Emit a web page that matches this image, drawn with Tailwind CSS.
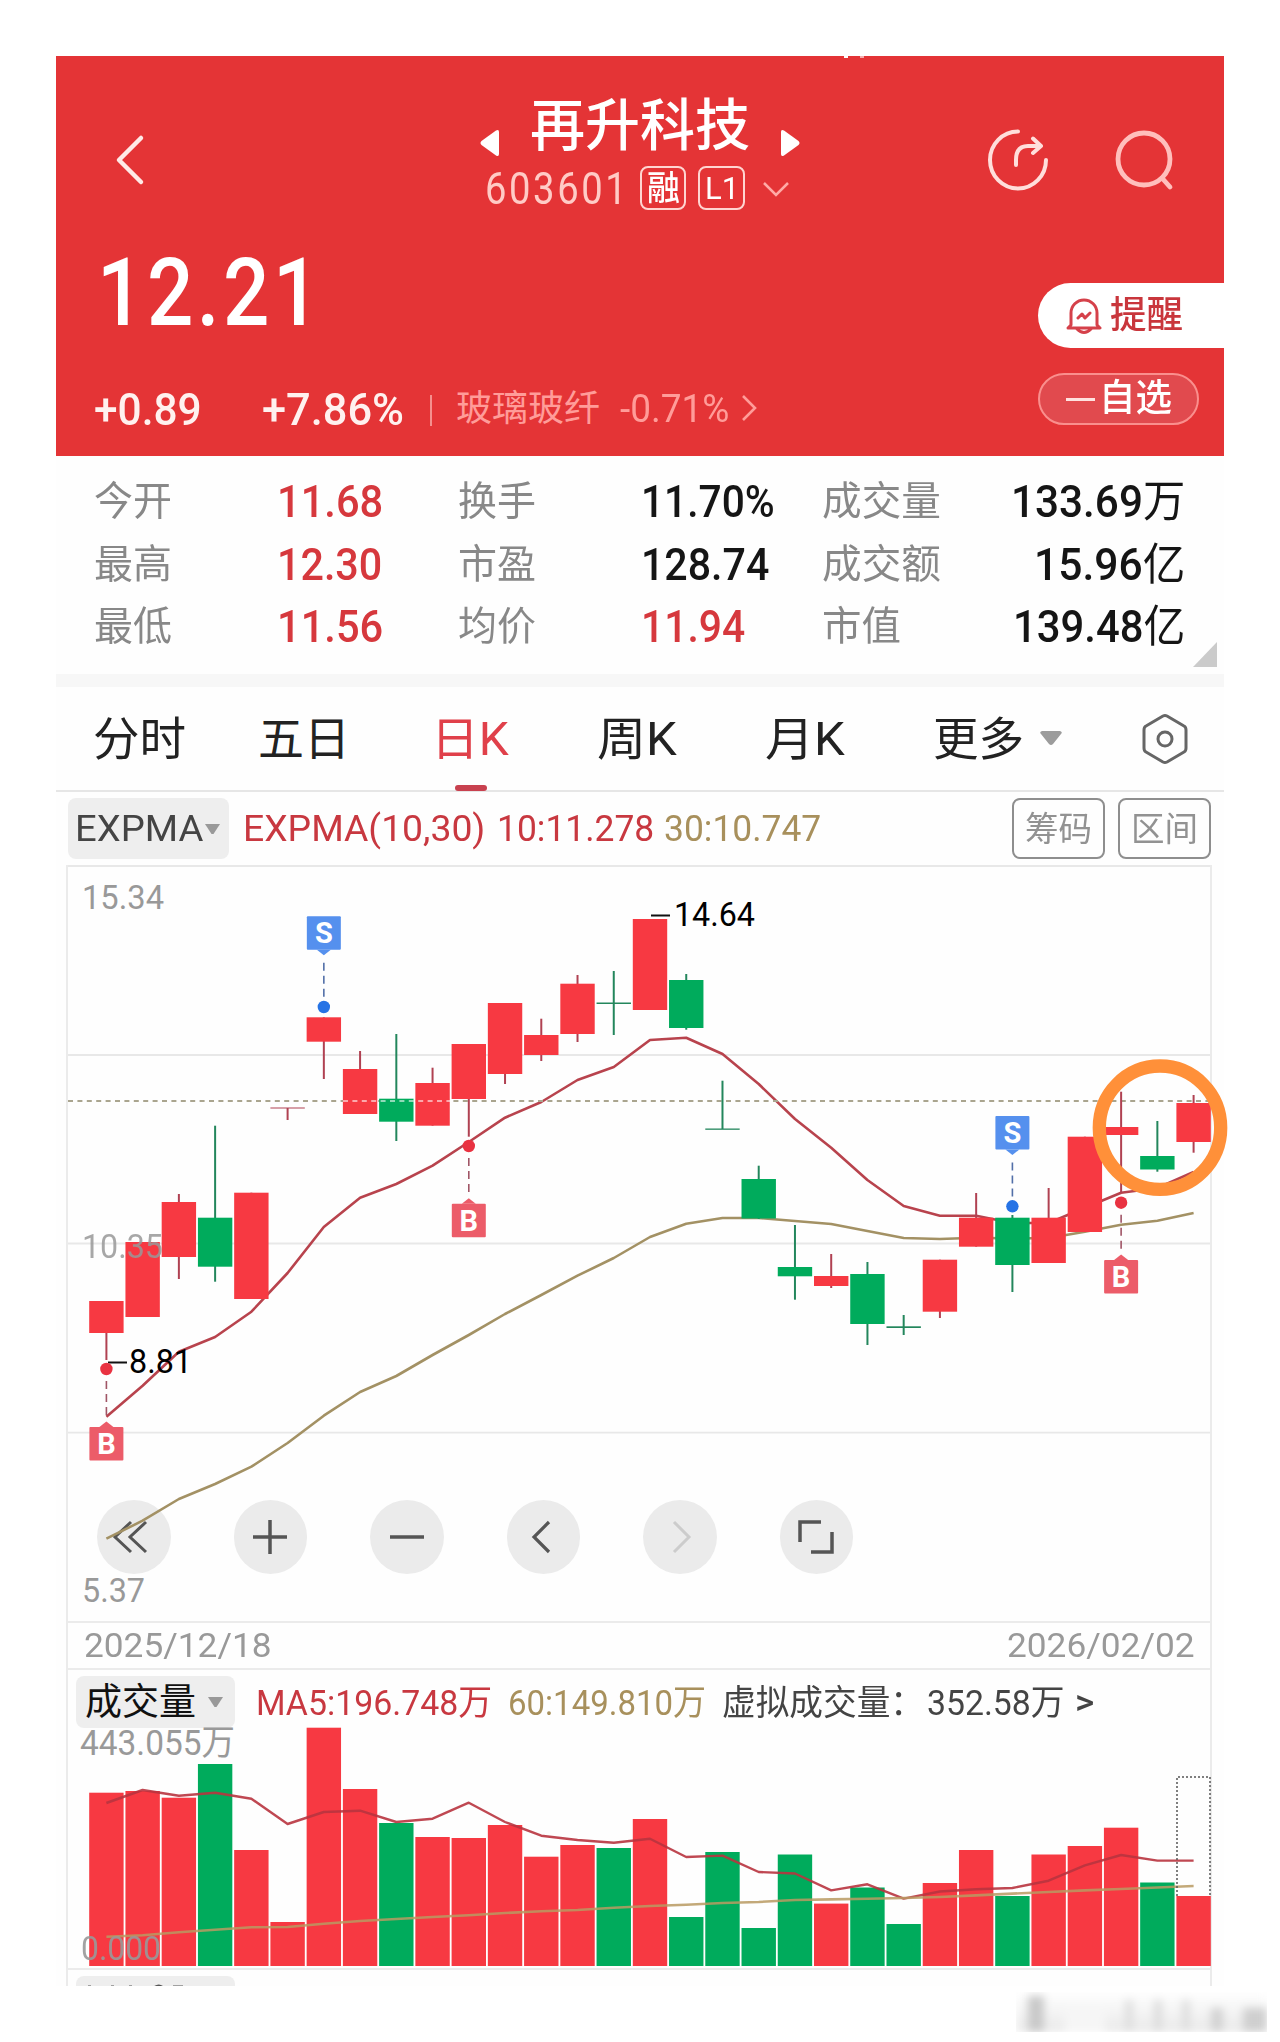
<!DOCTYPE html>
<html lang="zh-CN">
<head>
<meta charset="utf-8">
<title>再升科技 603601</title>
<script src="https://cdn.jsdelivr.net/npm/@tailwindcss/browser@4"></script>
</head>
<body class="bg-white">
<div class="relative w-[1280px] h-[2042px] overflow-hidden pt-14 pl-14 font-['Roboto','Noto_Sans_CJK_SC',sans-serif] leading-none">
<main class="w-[1168px] bg-[#fefefe]">

  <!-- quote header -->
  <header class="h-[400px] bg-[#e43436] text-white">
    <div class="flex h-[172px] items-start">
      <svg class="ml-[57px] mt-[78px] shrink-0" width="34" height="52" viewBox="0 0 34 52" fill="none" stroke="#ffeae7" stroke-width="4.5" stroke-linecap="round" stroke-linejoin="round"><path d="M28 4L6 26 28 48"/></svg>
      <div class="ml-[333px] w-[320px] shrink-0 pt-[38px]">
        <div class="flex h-[66px] items-start">
          <svg class="mt-[35px] w-[19px] h-7 shrink-0" viewBox="0 0 19 28" fill="#fff"><path d="M19 3v22q0 3-3 1.500L1.500 16q-2-2 0-4L16 1.500Q19 0 19 3z"/></svg>
          <div class="fit ml-[31px] mt-1 w-[220px] text-[56px] font-medium">再升科技</div>
          <svg class="ml-[31px] mt-[35px] w-[19px] h-7 shrink-0" viewBox="0 0 19 28" fill="#fff"><path d="M0 3v22q0 3 3 1.500L17.500 16q2-2 0-4L3 1.500Q0 0 0 3z"/></svg>
        </div>
        <div class="mt-1.5 flex h-11 items-center">
          <div class="fit ml-[5px] mt-0.5 w-[144px] text-[44px] tracking-[3px] text-[#ffcbc6]">603601</div>
          <div class="ml-[11px] flex h-11 w-[46px] shrink-0 items-center justify-center rounded-lg border-2 border-[#ffd5d1] text-[34px] font-medium"><span class="fit w-[33px]">融</span></div>
          <div class="ml-3 flex h-11 w-[47px] shrink-0 items-center justify-center rounded-lg border-2 border-[#ffd5d1] text-[32px]"><span class="fit w-[34px]">L1</span></div>
          <svg class="ml-[18px] mt-1 shrink-0" width="26" height="16" viewBox="0 0 26 16" fill="none" stroke="#ffaaa6" stroke-width="2.500"><path d="M1 1l12 12L25 1"/></svg>
        </div>
      </div>
      <svg class="ml-[185px] mt-[70px] shrink-0" width="66" height="68" viewBox="984 126 66 68" fill="none" stroke="#ffdedb" stroke-width="4" stroke-linecap="round" stroke-linejoin="round"><path d="M1017 131.500A28 28.500 0 1 0 1045 160M1015 165v-5q0-14 12-14h13M1032 138.500l8 7.500-8 7"/></svg>
      <svg class="ml-[61px] mt-[70px] shrink-0" width="66" height="68" viewBox="1112 126 66 68" fill="none" stroke="#ffbfbc" stroke-width="4.800" stroke-linecap="round"><circle cx="1144" cy="159" r="26"/><path d="M1162 178l8 9"/></svg>
    </div>
    <div class="flex h-[228px] justify-between">
      <div>
        <div class="fit ml-[41px] mt-[18px] w-[226px] text-[94px] font-medium tracking-[4px]">12.21</div>
        <div class="mt-[48px] flex h-11 items-center">
          <div class="fit ml-[38px] w-[108px] text-[44px] font-medium text-[#fff1ef]">+0.89</div>
          <div class="fit ml-[60px] w-[142px] text-[44px] font-medium text-[#fff1ef]">+7.86%</div>
          <div class="ml-[26px] h-[31px] w-0.5 bg-[#f58f8d]"></div>
          <div class="fit ml-6 mb-0.5 w-[144px] text-[36px] text-[#ff9c99]">玻璃玻纤</div>
          <div class="fit ml-5 mb-0.5 w-[109px] text-[39px] text-[#ff9c99]">-0.71%</div>
          <svg class="ml-3 mb-1" width="16" height="26" viewBox="0 0 16 26" fill="none" stroke="#ff9c99" stroke-width="2.600"><path d="M2 1l12 12L2 25"/></svg>
        </div>
      </div>
      <div class="flex w-[186px] flex-col gap-[25px] pt-[55px]">
        <div class="flex h-[65px] items-center rounded-l-full bg-white text-[#c9363c]">
          <svg class="ml-7 shrink-0" width="36" height="38" viewBox="0 0 36 38" fill="none" stroke="#d5414a" stroke-width="3" stroke-linecap="round" stroke-linejoin="round"><path d="M5 28V16a13 13 0 0 1 26 0v12l3 3H2zM11 32q7 7 14 0M12 21l4-4 3 4 5-5"/></svg>
          <span class="fit ml-2 w-[73px] text-[37px] font-medium">提醒</span>
        </div>
        <div class="flex h-[52px] w-[161px] items-center rounded-full border-2 border-[#fa8f8d] bg-[#e14a4e]">
          <div class="ml-[26px] h-[3px] w-[29px] shrink-0 bg-[#ffe2df]"></div>
          <span class="fit ml-1 mb-0.5 w-[73px] text-[37px] font-medium">自选</span>
        </div>
      </div>
    </div>
  </header>

  <!-- key figures -->
  <section class="relative h-[218px] pt-[15px]">
    <div class="grid grid-cols-[183px_181px_183px_181px_181px_181px] auto-rows-[62.5px] items-center pl-[38px] text-[44px] text-[#151515]">
      <div class="fit w-[78px] text-[40px] text-[#888]">今开</div><div class="fit w-[106px] font-medium text-[#d6383d]">11.68</div>
      <div class="fit w-[78px] text-[40px] text-[#888]">换手</div><div class="fit w-[134px] font-medium">11.70%</div>
      <div class="fit w-[119px] text-[40px] text-[#888]">成交量</div><div class="fit ml-2 w-[174px]"><b class="font-medium">133.69</b>万</div>
      <div class="fit w-[78px] text-[40px] text-[#888]">最高</div><div class="fit w-[105px] font-medium text-[#d6383d]">12.30</div>
      <div class="fit w-[78px] text-[40px] text-[#888]">市盈</div><div class="fit w-[128px] font-medium">128.74</div>
      <div class="fit w-[119px] text-[40px] text-[#888]">成交额</div><div class="fit ml-[31px] w-[151px]"><b class="font-medium">15.96</b>亿</div>
      <div class="fit w-[78px] text-[40px] text-[#888]">最低</div><div class="fit w-[106px] font-medium text-[#d6383d]">11.56</div>
      <div class="fit w-[78px] text-[40px] text-[#888]">均价</div><div class="fit w-[104px] font-medium text-[#d6383d]">11.94</div>
      <div class="fit w-[79px] text-[40px] text-[#888]">市值</div><div class="fit ml-2.5 w-[172px]"><b class="font-medium">139.48</b>亿</div>
    </div>
    <svg class="absolute right-[7px] bottom-[7px]" width="24" height="25" viewBox="0 0 24 25" fill="#cbcbcb"><path d="M24 0v25H0z"/></svg>
  </section>
  <div class="h-[13px] bg-[#f7f7f7]"></div>

  <!-- period tabs -->
  <nav class="flex h-[105px] items-center border-b-2 border-[#e6e6e6] text-[46px] text-[#222]">
    <div class="fit ml-[37px] w-[93px]">分时</div>
    <div class="fit ml-[72px] w-[92px]">五日</div>
    <div class="relative ml-[81px] flex h-full w-[78px] shrink-0 items-center text-[#e0404a]"><span class="fit w-[78px]">日K</span><span class="absolute bottom-[-1px] left-6 h-1.5 w-8 rounded-full bg-[#c8414f]"></span></div>
    <div class="fit ml-[88px] w-[80px]">周K</div>
    <div class="fit ml-[88px] w-[80px]">月K</div>
    <div class="fit ml-[88px] w-[91px]">更多</div>
    <svg class="ml-4 shrink-0" width="22" height="15" viewBox="0 0 22 15" fill="#9c9c9c"><path d="M2 0h18q3 1 1 3l-8 10q-2 2-4 0L1 3Q-1 1 2 0z"/></svg>
    <svg class="ml-[79px] shrink-0" width="48" height="52" viewBox="0 0 48 52" fill="none" stroke="#666" stroke-width="3" stroke-linejoin="round"><path d="M22 3q2-1 4 0l17 10q2 1 2 4v18q0 3-2 4L26 49q-2 1-4 0L5 39q-2-1-2-4V17q0-3 2-4z"/><circle cx="24" cy="26" r="7"/></svg>
  </nav>

  <!-- indicator bar -->
  <div class="flex h-[73px] items-start pt-1.5">
    <div class="ml-3 flex h-[61px] w-[161px] shrink-0 items-center rounded-lg bg-[#eee] text-[37px] text-[#444]"><span class="fit ml-[7px] w-[128px]">EXPMA</span><svg class="ml-0.5" width="15" height="10" viewBox="0 0 15 10" fill="#999"><path d="M0 0h15L8.500 10h-2z"/></svg></div>
    <div class="flex h-[61px] items-center text-[37px] text-[#c83840]">
      <span class="fit ml-3.5 w-[242px]">EXPMA(10,30)</span>
      <span class="fit ml-3 w-[157px]">10:11.278</span>
      <span class="fit ml-2.5 w-[157px] text-[#a8905c]">30:10.747</span>
    </div>
    <div class="ml-[191px] flex h-[61px] w-[93px] items-center justify-center rounded-lg border-2 border-[#8e8e8e] text-[34px] text-[#929292]"><span class="fit w-[67px]">筹码</span></div>
    <div class="ml-[13px] flex h-[61px] w-[93px] items-center justify-center rounded-lg border-2 border-[#8e8e8e] text-[34px] text-[#929292]"><span class="fit w-[67px]">区间</span></div>
  </div>

  <!-- charts -->
  <div class="ml-2.5 h-[1121px] w-[1146px] overflow-visible border-x-2 border-[#ebebeb]">
    <div class="relative h-[756px]">
      <div class="absolute top-[635px] left-[29px] flex gap-[63px]">
        <div class="flex size-[73.500px] items-center justify-center rounded-full bg-[#ebebeb]"><svg class="-ml-2" width="36" height="34" viewBox="0 0 36 34" fill="none" stroke="#555" stroke-width="3"><path d="M19 2L3 17l16 15M34 2L18 17l16 15"/></svg></div>
        <div class="flex size-[73.500px] items-center justify-center rounded-full bg-[#ebebeb]"><svg width="36" height="36" viewBox="0 0 36 36" stroke="#555" stroke-width="3.500"><path d="M1 18h34M18 1v34"/></svg></div>
        <div class="flex size-[73.500px] items-center justify-center rounded-full bg-[#ebebeb]"><svg width="36" height="36" viewBox="0 0 36 36" stroke="#555" stroke-width="3.500"><path d="M1 18h34"/></svg></div>
        <div class="flex size-[73.500px] items-center justify-center rounded-full bg-[#ebebeb]"><svg class="-ml-1" width="20" height="34" viewBox="0 0 20 34" fill="none" stroke="#555" stroke-width="3.200"><path d="M18 2L3 17l15 15"/></svg></div>
        <div class="flex size-[73.500px] items-center justify-center rounded-full bg-[#ebebeb]"><svg class="ml-1" width="20" height="34" viewBox="0 0 20 34" fill="none" stroke="#ccc" stroke-width="3"><path d="M2 2l15 15L2 32"/></svg></div>
        <div class="flex size-[73.500px] items-center justify-center rounded-full bg-[#ebebeb]"><svg width="36" height="36" viewBox="0 0 36 36" fill="none" stroke="#555" stroke-width="3.500"><path d="M2 23V3h21M34 13v20H13"/></svg></div>
      </div>
      <svg id="kline" class="relative block overflow-visible" width="1142" height="756" viewBox="68 865 1142 756"></svg>
    </div>
    <div class="flex h-[49px] items-center justify-between border-y-2 border-[#ebebeb] pr-[15px] pl-4 text-[33px] text-[#999]">
      <span class="fit w-[188px]">2025/12/18</span><span class="fit w-[188px]">2026/02/02</span>
    </div>
    <div class="flex h-[58px] items-start pt-1.5 text-[35px]">
      <div class="ml-2 flex h-[52px] w-[159px] shrink-0 items-center rounded-lg bg-[#eee] text-[37px] text-[#111]"><span class="fit ml-[9px] w-[111px]">成交量</span><svg class="ml-3" width="15" height="10" viewBox="0 0 15 10" fill="#999"><path d="M0 0h15L8.500 10h-2z"/></svg></div>
      <div class="flex h-[52px] items-center">
        <span class="fit ml-[21px] mt-0.5 w-[236px] text-[#c83840]">MA5:196.748万</span>
        <span class="fit ml-4 mt-0.5 w-[198px] text-[#a8905c]">60:149.810万</span>
        <span class="fit ml-4 mt-0.5 w-[202px] text-[#444]">虚拟成交量：</span>
        <span class="fit ml-[3px] mt-0.5 w-[138px] text-[#444]">352.58万</span>
        <span class="fit ml-2.5 w-[19px] font-medium text-[#444]">&gt;</span>
      </div>
    </div>
    <svg id="volume" class="block overflow-visible" width="1142" height="240" viewBox="68 1728 1142 240"></svg>
    <div class="h-[18px] overflow-hidden border-t-2 border-[#ebebeb] pt-1.5">
      <div class="ml-2 h-11 w-[159px] rounded-lg bg-[#eee]"><svg class="pt-[7px]" width="159" height="12" viewBox="0 0 159 5" fill="none" stroke="#555" stroke-width="3"><path d="M12 4h3M35 4h3M53 4h3M78 5q5-4 9 0M97 4h10"/></svg></div>
    </div>
  </div>
</main>
<div class="absolute top-[1992px] left-[1016px] h-[40px] w-[251px] overflow-hidden">
  <div class="flex size-full items-end justify-between bg-linear-to-b from-white to-[#e9e9e9] pl-3 blur-[4px]"><i class="h-9 w-4 bg-[#c9c9c9]"></i><i class="h-6 w-10 bg-[#f6f6f6]"></i><i class="h-8 w-2 bg-[#dedede]"></i><i class="h-8 w-2 bg-[#dcdcdc]"></i><i class="h-8 w-2 bg-[#dedede]"></i><i class="h-6 w-3 bg-[#d2d2d2]"></i><i class="h-6 w-6 bg-[#cfcfcf]"></i></div>
</div>
<div class="absolute top-14 left-[844px] flex gap-3"><i class="h-0.5 w-1 bg-white"></i><i class="h-0.5 w-1 bg-white/60"></i></div>
</div>

<script>
const RED = '#f73942', GREEN = '#00ab5c';
const cx = i => 106.4 + 36.24 * i;
const line = (x1, y1, x2, y2, c, w, extra = '') => `<line x1="${x1}" y1="${y1}" x2="${x2}" y2="${y2}" stroke="${c}" stroke-width="${w}" ${extra}/>`;
const poly = (ys, c, w, extra = '') => `<polyline fill="none" stroke="${c}" stroke-width="${w}" stroke-linejoin="round" points="${ys.map((y, i) => cx(i).toFixed(1) + ',' + y).join(' ')}" ${extra}/>`;
const label = (x, y, w, size, c, t, extra = '') => `<text x="${x}" y="${y}" font-size="${size}" fill="${c}" textLength="${w}" lengthAdjust="spacingAndGlyphs" ${extra}>${t}</text>`;

// colour, body top, body bottom, high, low
const candles = [
  ['r',1301,1333,1301,1360],['r',1242,1317,1242,1317],['r',1202,1257,1194,1279],['g',1217.7,1266.7,1125.7,1281.7],
  ['r',1192.7,1299,1192.7,1299],['r',1107.5,1108.5,1108,1120],['r',1017.3,1041.7,1017.3,1079],['r',1069,1114,1051,1114],
  ['g',1098.7,1121.7,1034,1141],['r',1083,1125.7,1067.7,1125.7],['r',1044,1099,1044,1136.7],['r',1003,1074,1003,1084],
  ['r',1035,1055,1018.7,1061],['r',983.7,1034,975,1042],['g',1002.5,1004,971,1035],['r',919,1010,919,1010],
  ['g',980,1028,974,1029.7],['g',1128.5,1129.8,1080.7,1129],['g',1179,1218.5,1165.7,1219],['g',1267,1276.3,1225,1299.7],
  ['r',1276,1286,1254,1288],['g',1274,1324,1262,1345],['g',1326.3,1328,1315,1335],['r',1259.7,1311.7,1259.7,1318],
  ['r',1217.7,1246.7,1193,1246.7],['g',1217.7,1265,1215,1292],['r',1217.7,1263,1188,1263],['r',1136.7,1232,1136.7,1232],
  ['r',1127,1135,1091.7,1192.7],['g',1156,1169.5,1121,1171.7],['r',1103,1142,1095,1152.7]];
const ema10 = [1416.7,1385.7,1351.7,1337,1311.7,1273,1227,1197.7,1184,1165.7,1142,1117.7,1102,1080,1067,1040,1037.7,1054,1084,1119,1147.7,1180,1206,1215.7,1215.7,1223,1223,1207.7,1192.7,1188,1172];
const ema30 = [1538.7,1520.7,1499,1484,1466.7,1443,1415.7,1392,1376,1355,1335,1314,1295,1275.7,1258,1237,1223.7,1218,1218,1221,1224,1231,1238,1239,1237.7,1238.5,1238,1231.7,1224.7,1220.7,1213];

const marker = (i, kind, top, dot) => {
  const x = cx(i), sell = kind === 'S', c = sell ? '#5590ee' : '#ec5c69', l = x - 17, b = top + 33.5;
  const tip = sell ? `M${x-7} ${b}h14l-7 5.5z` : `M${x-7} ${top}h14l-7-5.500z`;
  return line(x, sell ? b + 13 : dot + 12, x, sell ? dot - 6 : top - 10, sell ? '#526fa8' : '#a05566', 1.6, 'stroke-dasharray="8 5"')
    + `<circle cx="${x}" cy="${dot}" r="6.200" fill="${sell ? '#2673e5' : '#e93241'}"/>`
    + `<rect x="${l}" y="${top}" width="34" height="33.500" rx="1" fill="${c}"/><path d="${tip}" fill="${c}"/>`
    + `<text x="${x}" y="${top + 27}" font-size="29" font-weight="700" fill="#fff" text-anchor="middle">${kind}</text>`;
};

let s = '';
[866, 1055, 1243.5, 1432.7].forEach(y => s += line(68, y, 1210, y, '#e8e8e8', 1.8));
s += poly(ema30, '#a39164', 2.6) + poly(ema10, '#b8434d', 2.6);
s += line(68, 1101, 1210, 1101, '#aaa58f', 1.8, 'stroke-dasharray="5 4.400"');
candles.forEach(([k, t, b, h, l], i) => {
  const c = k === 'r' ? RED : GREEN, wick = k === 'r' ? '#b04152' : '#23865c';
  s += line(cx(i), h, cx(i), l, wick, 2);
  s += `<rect x="${cx(i) - 17.2}" y="${t}" width="34.400" height="${b - t}" fill="${b - t < 2 ? wick : c}"/>`;
});
s += line(343, 1101, 450, 1101, '#fff', 1.6, 'stroke-dasharray="5 4.400" opacity=".75"');
s += label(82, 909, 82, 33, '#999', '15.34') + label(82, 1257.5, 81, 33, '#999', '10.35', 'opacity=".85"') + label(82, 1602, 63, 33, '#999', '5.37');
s += line(651, 915.5, 670, 915.5, '#111', 2) + label(674, 926, 81, 33, '#000', '14.64');
s += line(108, 1362.5, 127, 1362.5, '#111', 2) + label(129, 1373, 63, 33, '#000', '8.81');
s += marker(6, 'S', 916.3, 1007) + marker(10, 'B', 1203.7, 1146) + marker(25, 'S', 1116, 1206.3) + marker(28, 'B', 1260, 1202.7) + marker(0, 'B', 1427, 1369);
s += '<ellipse cx="1160" cy="1127.700" rx="60.700" ry="61.700" fill="none" stroke="#ff9039" stroke-width="13.300"/>';
document.getElementById('kline').innerHTML = s;

// bar tops; the string gives each bar's direction
const tops = [1792.7,1791,1797.7,1764,1850,1922,1727.7,1789,1823,1837,1838,1825,1856.7,1845,1848,1819,1917,1852,1928,1854.5,1903.6,1887.5,1924,1883,1850,1896,1854.5,1846,1827.7,1882.5,1896];
const dirs = 'rrrgrrrrgrrrrrgrggggrggrrgrrrgr';
const ma5 = [1803,1790,1795.7,1792.7,1798.7,1824,1812,1810.7,1822,1818.7,1802.7,1822,1835.7,1840,1842.7,1838.7,1857,1855.6,1872,1873.5,1890.4,1884.3,1898.6,1891.5,1889.3,1888,1880.7,1865.3,1855,1860.6,1860.6];
const ma60 = [1936.7,1935.3,1932.3,1929.7,1927.3,1927,1923.7,1921,1919,1917,1915.3,1913,1911.3,1910,1907.7,1906,1904.7,1903,1902,1900,1899.4,1898.7,1898,1897,1895.4,1893.6,1892,1890.4,1889,1887.5,1886];
let v = '';
tops.forEach((t, i) => v += `<rect x="${cx(i) - 17.2}" y="${t}" width="34.400" height="${1966 - t}" fill="${dirs[i] === 'r' ? RED : GREEN}"/>`);
v += poly(ma5, '#b8343f', 2.4, 'opacity=".9"') + poly(ma60, '#b99a62', 2.6, 'opacity=".85"');
v += '<path d="M1177 1896V1777h33v119" fill="none" stroke="#555" stroke-width="1.500" stroke-dasharray="2 2"/>';
v += label(80, 1755, 155, 35, '#999', '443.055万') + label(81, 1960, 80, 34, '#999', '0.000', 'opacity=".9"');
document.getElementById('volume').innerHTML = v;

// condense each label horizontally to the width of its slot, again whenever either one's size changes
const fit = el => {
  const slot = el.firstElementChild;
  if (slot.offsetWidth) slot.style.transform = `scaleX(${el.offsetWidth / slot.offsetWidth})`;
};
const watcher = new ResizeObserver(list => list.forEach(({ target }) => fit(target.closest('.fit'))));
document.querySelectorAll('.fit').forEach(el => {
  const slot = document.createElement('span');
  slot.className = 'inline-block origin-left whitespace-nowrap';
  while (el.firstChild) slot.appendChild(el.firstChild);
  el.appendChild(slot);
  el.classList.add('block', 'shrink-0');
  watcher.observe(el);
  watcher.observe(slot);
});
window.addEventListener('load', () => document.querySelectorAll('.fit').forEach(fit));
</script>
</body>
</html>
